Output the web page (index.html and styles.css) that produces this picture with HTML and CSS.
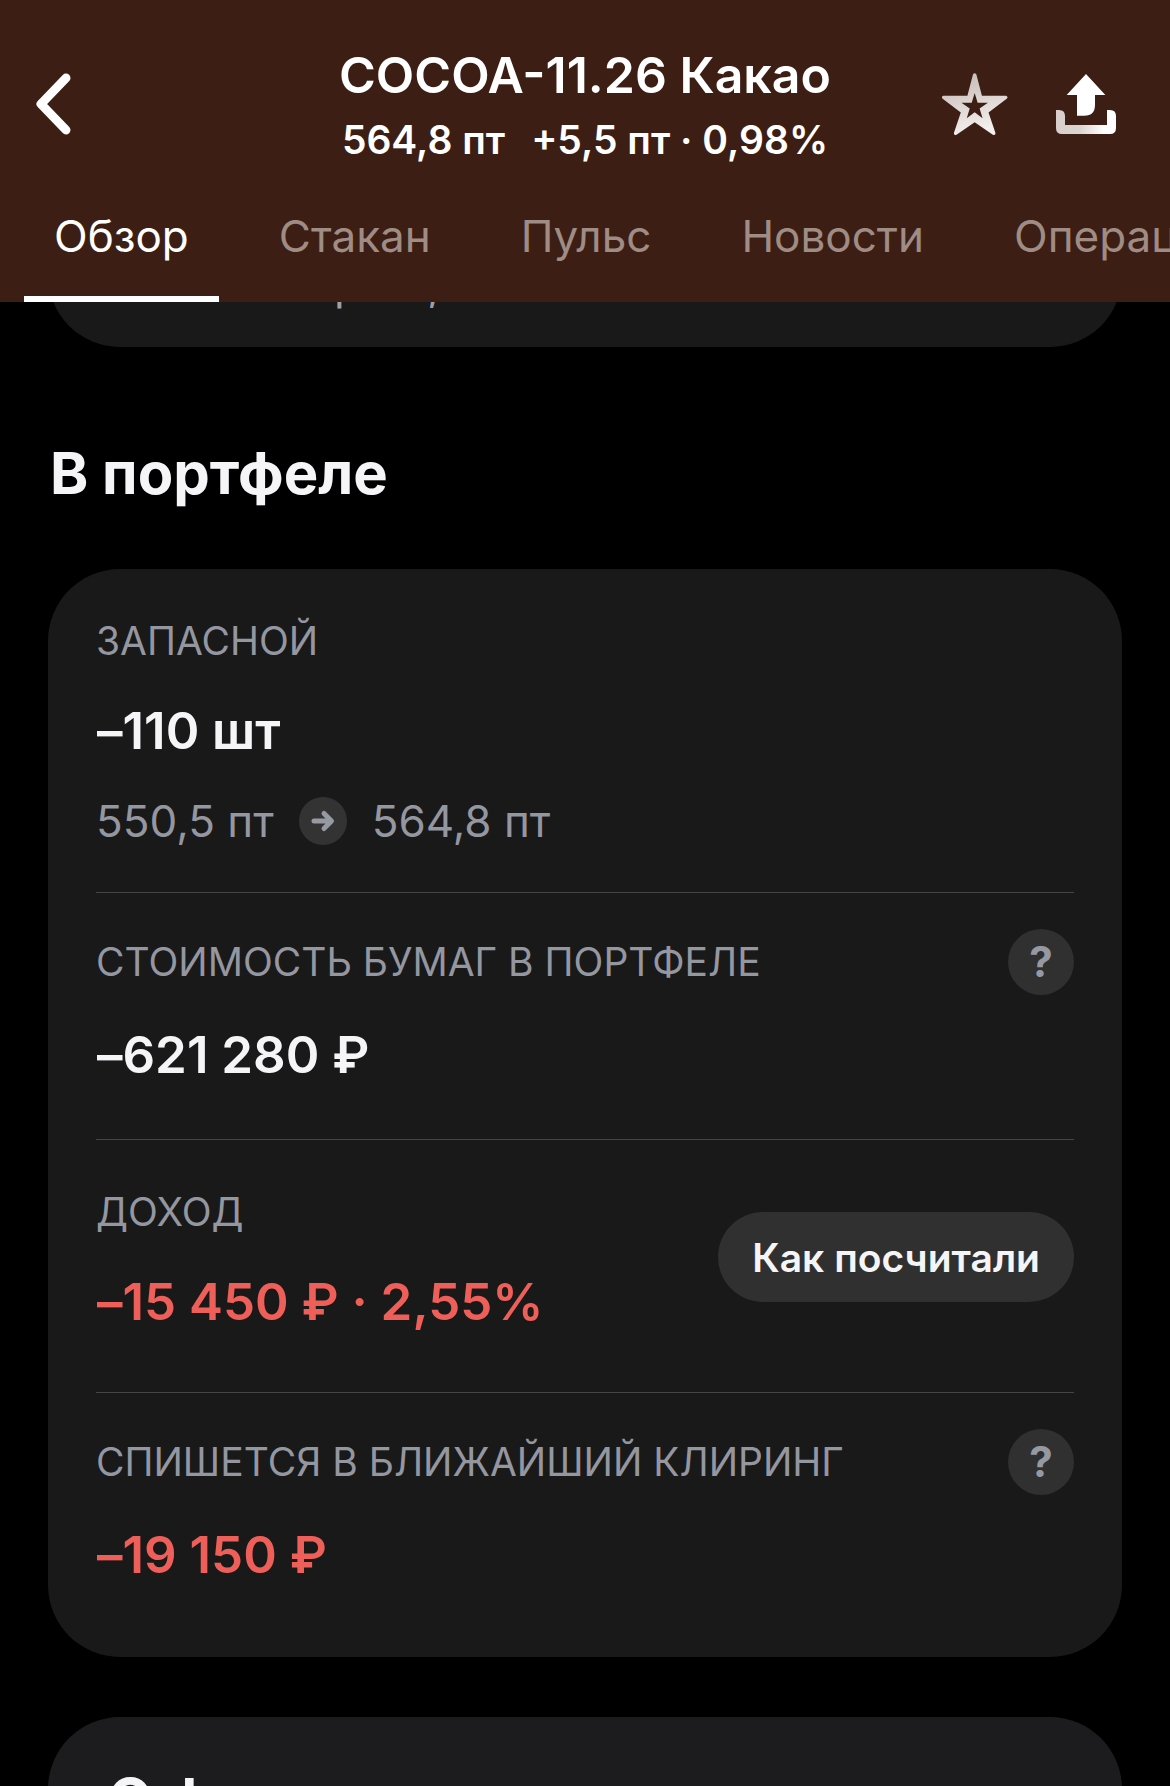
FILE: index.html
```html
<!DOCTYPE html>
<html lang="ru">
<head>
  <meta charset="UTF-8" />
  <meta name="viewport" content="width=device-width, initial-scale=1.0"/>
  <title>COCOA-11.26 Какао</title>
  <link rel="stylesheet" href="styles.css">
</head>
<body>
  <header class="header">
    <div class="topbar">
      <button type="button" class="icon-btn back" aria-label="Назад">
        <svg width="36" height="62" viewBox="0 0 36 62" fill="none" stroke="#fff" stroke-width="9" stroke-linecap="round" stroke-linejoin="round">
          <path d="M30 5L5 31l25 26"/>
        </svg>
      </button>
      <div class="instrument">
        <h1>COCOA-11.26 Какао</h1>
        <p class="quote"><span>564,8 пт</span><span>+5,5 пт · 0,98%</span></p>
      </div>
      <div class="actions">
        <button type="button" class="icon-btn" aria-label="В избранное">
          <svg width="66" height="64" viewBox="126 93 200 192">
            <defs>
              <linearGradient id="star-fill" x1="0" y1="0" x2="0.3" y2="1">
                <stop offset="0" stop-color="#c4b8b4"/>
                <stop offset="0.3" stop-color="#d0c6c2"/>
                <stop offset="1" stop-color="#f3efed"/>
              </linearGradient>
            </defs>
            <path fill="url(#star-fill)" fill-rule="evenodd" d="M220 99Q225 92 230 99L247 164H320Q328 167 322 173L267 215L288 277Q288 286 280 282L225 244L170 282Q162 286 162 277L183 215L128 173Q122 167 130 164H203ZM225 156L216 185H185L210 203L201 232L225 214L249 232L240 203L265 185H234Z"/>
          </svg>
        </button>
        <button type="button" class="icon-btn" aria-label="Поделиться">
          <svg width="60" height="60" viewBox="468 93 180 180">
            <defs>
              <linearGradient id="tray-fill" x1="0" y1="0" x2="1" y2="0">
                <stop offset="0" stop-color="#d8cfcc"/>
                <stop offset="0.4" stop-color="#dcd4d1"/>
                <stop offset="0.8" stop-color="#fff"/>
              </linearGradient>
            </defs>
            <path fill="#fff" d="M558 93l58 63h-31v30q0 32-32 32h-22v-62h-31z"/>
            <path fill="url(#tray-fill)" d="M468 201h9q18 0 18 18v27h126v-45h9q18 0 18 18v36q0 18-18 18H486q-18 0-18-18z"/>
          </svg>
        </button>
      </div>
    </div>
    <nav class="tabs">
      <a href="#overview" class="tab active">Обзор</a>
      <a href="#book" class="tab">Стакан</a>
      <a href="#pulse" class="tab">Пульс</a>
      <a href="#news" class="tab">Новости</a>
      <a href="#operations" class="tab">Операции</a>
    </nav>
  </header>

  <main class="content">
    <section class="card card-prev">
      <p>Назван вторым,</p>
    </section>

    <h2>В портфеле</h2>

    <section class="card">
      <div class="block">
        <h3 class="label">Запасной</h3>
        <p class="value">–110 шт</p>
        <p class="prices">
          <span>550,5 пт</span>
          <svg width="48" height="48" viewBox="0 0 48 48" fill="none" stroke="#9699a2" stroke-width="5" stroke-linecap="round" stroke-linejoin="round">
            <circle cx="24" cy="24" r="24" fill="#333334" stroke="none"/>
            <path d="M15 24h17M25 16.500l7.500 7.500-7.500 7.500"/>
          </svg>
          <span>564,8 пт</span>
        </p>
      </div>

      <div class="block block-help">
        <div class="label-row">
          <h3 class="label">Стоимость бумаг в портфеле</h3>
          <button type="button" class="help" aria-label="Подробнее о стоимости">?</button>
        </div>
        <p class="value">–621 280 ₽</p>
      </div>

      <div class="block block-income">
        <div>
          <h3 class="label">Доход</h3>
          <p class="value loss">–15 450 ₽ · 2,55%</p>
        </div>
        <button type="button" class="pill">Как посчитали</button>
      </div>

      <div class="block block-help">
        <div class="label-row">
          <h3 class="label">Спишется в ближайший клиринг</h3>
          <button type="button" class="help" aria-label="Подробнее о клиринге">?</button>
        </div>
        <p class="value loss">–19 150 ₽</p>
      </div>
    </section>

    <section class="card card-about">
      <h2>О фьючерсе</h2>
    </section>
  </main>
</body>
</html>
```

FILE: styles.css
```css
* {
  box-sizing: border-box;
}

body {
  margin: 0;
  height: 100vh;
  overflow: hidden;
  display: flex;
  flex-direction: column;
  background: #000;
  color: #f5f5f7;
  font-family: Inter, "Liberation Sans", sans-serif;
}

h1, h2, h3, p {
  margin: 0;
}

button {
  font-family: inherit;
  border: none;
  padding: 0;
  cursor: pointer;
}

/* header */
.header {
  flex: none;
  background: #3d1e14;
  color: #fff;
  padding-top: 44px;
}

.topbar {
  display: grid;
  grid-template-columns: 1fr auto 1fr;
  align-items: center;
  padding: 0 54px 0 36px;
}

.icon-btn {
  display: block;
  background: none;
  padding-bottom: 10px;
}

.icon-btn svg {
  display: block;
}

.instrument {
  text-align: center;
  padding-left: 18px;
}

h1 {
  font-size: 50px;
  line-height: 62px;
  font-weight: 600;
  white-space: nowrap;
}

.quote {
  display: flex;
  justify-content: center;
  gap: 26px;
  font-size: 39px;
  line-height: 68px;
  font-weight: 600;
  white-space: nowrap;
}

.actions {
  display: flex;
  justify-content: flex-end;
  align-items: center;
  gap: 48px;
}

.tabs {
  display: flex;
  gap: 30px;
  padding: 22px 24px 0;
  overflow: hidden;
}

.tab {
  flex: none;
  padding: 8px 30px 28px;
  border-bottom: 6px solid transparent;
  color: #9e8c85;
  font-size: 44px;
  line-height: 64px;
  text-decoration: none;
}

.tab.active {
  color: #fff;
  border-color: #fff;
}

/* content */
.content {
  flex: 1;
  min-height: 0;
  overflow: hidden;
  padding: 0 48px;
}

.card {
  background: #191919;
  border-radius: 72px;
  padding: 0 48px;
}

/* scrolled under the header */
.card-prev {
  margin-top: -120px;
  padding-top: 78px;
  padding-bottom: 39px;
  color: #a0a0a4;
  font-size: 44px;
  line-height: 48px;
}

h2 {
  font-size: 58px;
  line-height: 72px;
  font-weight: 700;
}

.content > h2 {
  margin: 90px 0 60px;
  padding: 0 2px;
}

.block {
  padding: 48px 0 47px;
}

.block + .block {
  border-top: 1px solid #444446;
}

.label {
  font-size: 39px;
  line-height: 48px;
  font-weight: 400;
  text-transform: uppercase;
  color: #9496a0;
}

.value {
  margin-top: 36px;
  padding-left: 1px;
  font-size: 51px;
  line-height: 60px;
  font-weight: 600;
  font-feature-settings: "calt" 0;
}

.loss {
  color: #ee5f59;
}

.prices {
  display: flex;
  align-items: center;
  gap: 25px;
  margin-top: 36px;
  font-size: 44px;
  line-height: 48px;
  color: #9496a0;
}

.block-help {
  padding: 36px 0 54px;
}

.block-help:last-child {
  padding-bottom: 72px;
}

.block-help .value {
  margin-top: 30px;
}

.label-row {
  display: flex;
  align-items: center;
  justify-content: space-between;
}

.help {
  flex: none;
  width: 66px;
  height: 66px;
  border-radius: 50%;
  background: #303031;
  color: #9699a2;
  font-size: 42px;
  line-height: 66px;
  font-weight: 700;
}

.block-income {
  display: flex;
  align-items: flex-start;
  justify-content: space-between;
  padding-bottom: 60px;
}

.pill {
  margin-top: 24px;
  padding: 0 34px;
  height: 90px;
  border-radius: 45px;
  background: #303031;
  color: #f5f5f7;
  font-size: 39px;
  font-weight: 600;
}

.card-about {
  margin-top: 60px;
  padding: 46px 60px;
  background: #1c1c1e;
}
```
